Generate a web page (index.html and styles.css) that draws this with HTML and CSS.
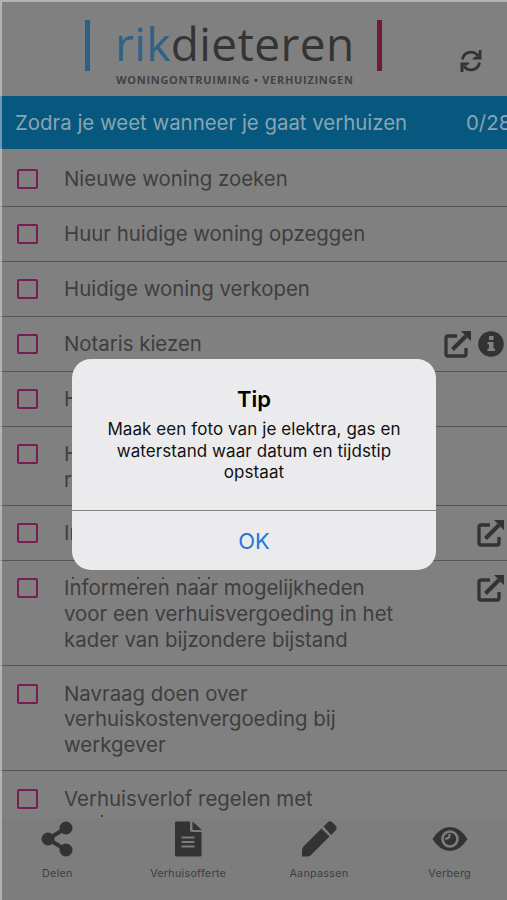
FILE: index.html
```
<!DOCTYPE html>
<html lang="nl">

<head>
    <meta charset="utf-8">
    <title>Rik Dieteren</title>
    <link rel="stylesheet" href="styles.css">
</head>

<body>
    <svg class="defs">
        <symbol id="external" viewBox="0 0 27 27">
            <path d="M13 5H4Q2 5 2 7V23Q2 25 4 25H20Q22 25 22 23V17" fill="none" stroke="currentColor" stroke-width="3.300" />
            <path d="M8.500 18.500L22 5" stroke="currentColor" stroke-width="4" />
            <path d="M17 0H27V10L23.800 7L20 3Z" fill="currentColor" />
        </symbol>
    </svg>
    <div class="app">
        <header class="header">
            <div class="logo">
                <div class="name"><span class="rik">rik</span><span class="dieteren">dieteren</span></div>
                <div class="slogan">WONINGONTRUIMING • VERHUIZINGEN</div>
            </div>
            <svg class="refresh" viewBox="0 0 22 22">
                <path d="M2.500 9.500A8.500 8.500 0 0 1 18 6M19.500 12.500A8.500 8.500 0 0 1 4 16" fill="none" stroke="currentColor" stroke-width="2.800" />
                <path d="M21.500 0V9.500H12L15 6.500H18.500V3L19 0ZM.500 22V12.500H10L7 15.500H3.500V22Z" fill="currentColor" />
            </svg>
        </header>
        <div class="section">
            <span class="title">Zodra je weet wanneer je gaat verhuizen</span>
            <span class="count">0/28</span>
        </div>
        <main class="list">
            <div class="row"><i class="check"></i><p>Nieuwe woning zoeken</p></div>
            <div class="row"><i class="check"></i><p>Huur huidige woning opzeggen</p></div>
            <div class="row"><i class="check"></i><p>Huidige woning verkopen</p></div>
            <div class="row">
                <i class="check"></i>
                <p>Notaris kiezen</p>
                <div class="icons">
                    <svg class="ext"><use href="#external" /></svg>
                    <svg class="info" viewBox="0 0 26 26">
                        <circle cx="13" cy="13" r="12.800" fill="currentColor" />
                        <path d="M11 5H15.500V9H11ZM9.500 11H15.500V17.500H17V20H9.500V17.500H11V13.500H9.500Z" fill="#808080" />
                    </svg>
                </div>
            </div>
            <div class="row"><i class="check"></i><p>H</p></div>
            <div class="row two"><i class="check"></i><p>H<br>r</p></div>
            <div class="row">
                <i class="check"></i>
                <p>In</p>
                <div class="icons"><svg class="ext"><use href="#external" /></svg></div>
            </div>
            <div class="row three">
                <i class="check"></i>
                <p>Informeren naar mogelijkheden<br>voor een verhuisvergoeding in het<br>kader van bijzondere bijstand</p>
                <div class="icons"><svg class="ext"><use href="#external" /></svg></div>
                <!-- overflow of the row above -->
                <svg class="rest" viewBox="0 0 150 3"><path d="M8 0h2v2h-2zM73 0h2v2h-2zM98 0h2v2h-2zM134 0h2v2h-2zM144 0h2v2h-2z" /></svg>
            </div>
            <div class="row three"><i class="check"></i><p>Navraag doen over<br>verhuiskostenvergoeding bij<br>werkgever</p></div>
            <div class="row last">
                <i class="check"></i>
                <p>Verhuisverlof regelen met</p>
                <svg class="rest bottom" viewBox="0 0 150 3"><path d="M37 0h2v2h-2z" /></svg>
            </div>
        </main>
        <nav class="tabs">
            <div class="tab">
                <svg viewBox="0 0 36 36">
                    <path d="M27 7L9 18L27 29" fill="none" stroke="currentColor" stroke-width="4" />
                    <circle cx="27" cy="7" r="6.500" /><circle cx="9" cy="18" r="6.500" /><circle cx="27" cy="29" r="6.500" />
                </svg>
                <span>Delen</span>
            </div>
            <div class="tab">
                <svg viewBox="0 0 36 36">
                    <path fill-rule="evenodd" d="M6 .500H20V9Q20 11 22 11H31.500V34Q31.500 35.500 30 35.500H6.500Q5 35.500 5 34V2Q5 .500 6 .500ZM11.500 15.500V17.500H24.500V15.500ZM11.500 20V22H24.500V20ZM11.500 24.500V26.500H24.500V24.500Z" />
                    <path d="M22.500 .500Q31 8 31.500 9H22.500Z" />
                </svg>
                <span>Verhuisofferte</span>
            </div>
            <div class="tab">
                <svg viewBox="0 0 36 36">
                    <path d="M20.500 7.500L28.500 15.500L10 34Q8.500 35.500 6.500 35.500H1V30Q1 27.500 2.500 25.500Z" />
                    <path d="M22.500 5.500L27 1Q29 -.500 31 1L35 5Q36.500 8 34.500 9.500L30 14Z" />
                </svg>
                <span>Aanpassen</span>
            </div>
            <div class="tab">
                <svg viewBox="0 0 36 36">
                    <path d="M.500 18Q8 6 18 6T35.500 18Q28 30 18 30T.500 18Z" />
                    <circle cx="18" cy="18" r="7.500" fill="none" stroke="#7d7d7d" stroke-width="2.600" />
                    <path d="M17.500 13Q18 18 13 17.500" fill="none" stroke="#7d7d7d" stroke-width="2.200" />
                </svg>
                <span>Verberg</span>
            </div>
        </nav>
        <div class="dialog">
            <div class="message">
                <h1>Tip</h1>
                <p>Maak een foto van je elektra, gas en<br>waterstand waar datum en tijdstip<br>opstaat</p>
            </div>
            <div class="ok">OK</div>
        </div>
    </div>
</body>

</html>
```
FILE: styles.css
```
* {
    box-sizing: border-box;
}

body {
    margin: 0;
    font-family: Inter, "Liberation Sans", sans-serif;
    color: #3e3e3e;
    background: #808080;
}

p, h1 {
    margin: 0;
}

.defs {
    display: none;
}

.app {
    position: relative;
    width: 507px;
    height: 900px;
    overflow: hidden;
    display: flex;
    flex-direction: column;
}

/* light edges */
.app::before {
    content: "";
    position: absolute;
    z-index: 2;
    top: 0;
    right: 0;
    bottom: 0;
    left: 0;
    border-top: 2px solid rgba(255, 255, 255, 0.4);
    border-left: 2px solid rgba(255, 255, 255, 0.4);
}

.header {
    height: 96px;
    flex: none;
    display: flex;
    justify-content: space-between;
    padding: 20px 25px 0 85px;
}

.logo {
    width: 297px;
    height: 51px;
    border-left: 5px solid #2e5f85;
    border-right: 5px solid #701c38;
    padding-left: 25px;
    white-space: nowrap;
}

.name {
    height: 48px;
    line-height: 46px;
    font-family: "Open Sans", sans-serif;
    font-size: 46px;
    letter-spacing: 0.4px;
}

.rik {
    color: #2e6288;
}

.dieteren {
    color: #343434;
}

.slogan {
    font-family: "Open Sans", sans-serif;
    font-weight: bold;
    font-size: 11px;
    line-height: 14px;
    margin: 5px 0 0 1px;
    letter-spacing: 0.7px;
    color: #424242;
}

.refresh {
    width: 22px;
    height: 22px;
    margin-top: 30px;
    color: #333;
}

.section {
    height: 53px;
    flex: none;
    display: flex;
    align-items: center;
    background: #06587e;
    color: #8ba4b1;
    font-size: 20.4px;
    white-space: nowrap;
    padding-left: 15px;
}

.title {
    width: 451px;
    flex: none;
}

.list {
    height: 669px;
    flex: none;
    overflow: hidden;
    padding-top: 2.6px;
}

.row {
    position: relative;
    height: 55px;
    display: flex;
    align-items: flex-start;
    padding: 14.6px 3px 0 17px;
    border-bottom: 1px solid #555;
}

.two {
    height: 79.3px;
}

.three {
    height: 105.3px;
}

.last {
    border: none;
}

.row p {
    flex: 1;
    font-size: 20.4px;
    line-height: 25.7px;
    white-space: nowrap;
}

.check {
    width: 21px;
    height: 20px;
    margin: 3px 26px 0 0;
    border: 2px solid #781c54;
    border-radius: 2px;
}

.icons {
    display: flex;
    gap: 7px;
    color: #333;
}

.ext {
    width: 27px;
    height: 27px;
}

.info {
    width: 26px;
    height: 26px;
}

.rest {
    position: absolute;
    left: 64px;
    top: 16px;
    width: 150px;
    height: 3px;
    fill: #444;
}

.bottom {
    top: 44px;
}

.tabs {
    flex: 1;
    display: flex;
    background: #7d7d7d;
    padding-top: 3px;
    margin: 0 -8px;
}

.tab {
    flex: 1;
    display: flex;
    flex-direction: column;
    align-items: center;
    font-size: 10.8px;
    letter-spacing: 0.25px;
}

.tab svg {
    width: 36px;
    height: 36px;
    margin-bottom: 10px;
    color: #333;
    fill: #333;
}

.dialog {
    position: absolute;
    left: 72px;
    top: 359px;
    width: 364px;
    height: 211px;
    border-radius: 19px;
    background: #ebebed;
    color: #111;
    text-align: center;
}

.message {
    height: 152px;
    padding-top: 26px;
    border-bottom: 1px solid #808080;
}

.message h1 {
    font-size: 22px;
    line-height: 29px;
    font-weight: 600;
    color: #000;
}

.message p {
    font-size: 17px;
    line-height: 21.6px;
    letter-spacing: 0.08px;
    margin-top: 5px;
}

.ok {
    font-size: 22px;
    line-height: 60px;
    color: #2577d8;
}
```
